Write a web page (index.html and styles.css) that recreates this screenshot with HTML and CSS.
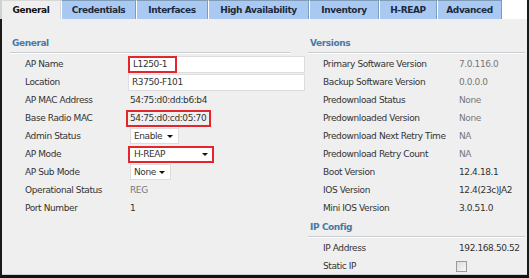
FILE: index.html
```html
<!DOCTYPE html>
<html lang="en">
<head>
    <meta charset="UTF-8">
    <title>AP Details</title>
    <link rel="stylesheet" href="styles.css">
</head>
<body>
    <div class="tabs">
        <div class="tab active" style="width:61px">General</div>
        <div class="tab" style="width:75px">Credentials</div>
        <div class="tab" style="width:72px">Interfaces</div>
        <div class="tab" style="width:101px">High Availability</div>
        <div class="tab" style="width:70px">Inventory</div>
        <div class="tab" style="width:58px">H-REAP</div>
        <div class="tab" style="width:65px">Advanced</div>
    </div>
    <div class="panel">
        <div class="col left">
            <div class="section-title">General</div>
            <div class="rows">
                <div class="row"><span class="label">AP Name</span>
                    <div class="field wide"><span class="mark">L1250-1</span></div></div>
                <div class="row"><span class="label">Location</span>
                    <div class="field wide">R3750-F101</div></div>
                <div class="row"><span class="label">AP MAC Address</span><span class="value">54:75:d0:dd:b6:b4</span></div>
                <div class="row"><span class="label">Base Radio MAC</span><span class="value mark-text">54:75:d0:cd:05:70</span></div>
                <div class="row"><span class="label">Admin Status</span>
                    <div class="select" style="width:49px">Enable<span class="arrow"></span></div></div>
                <div class="row"><span class="label">AP Mode</span>
                    <div class="select marked" style="width:86px">H-REAP<span class="arrow"></span></div></div>
                <div class="row"><span class="label">AP Sub Mode</span>
                    <div class="select" style="width:41px">None<span class="arrow"></span></div></div>
                <div class="row"><span class="label">Operational Status</span><span class="value dim">REG</span></div>
                <div class="row"><span class="label">Port Number</span><span class="value">1</span></div>
            </div>
        </div>
        <div class="col right">
            <div class="section-title">Versions</div>
            <div class="rows">
                <div class="row"><span class="label">Primary Software Version</span><span class="value dim">7.0.116.0</span></div>
                <div class="row"><span class="label">Backup Software Version</span><span class="value dim">0.0.0.0</span></div>
                <div class="row"><span class="label">Predownload Status</span><span class="value dim">None</span></div>
                <div class="row"><span class="label">Predownloaded Version</span><span class="value dim">None</span></div>
                <div class="row"><span class="label">Predownload Next Retry Time</span><span class="value dim">NA</span></div>
                <div class="row"><span class="label">Predownload Retry Count</span><span class="value dim">NA</span></div>
                <div class="row"><span class="label">Boot Version</span><span class="value">12.4.18.1</span></div>
                <div class="row"><span class="label">IOS Version</span><span class="value">12.4(23c)JA2</span></div>
                <div class="row"><span class="label">Mini IOS Version</span><span class="value">3.0.51.0</span></div>
            </div>
            <div class="section-title sub">IP Config</div>
            <div class="rows">
                <div class="row"><span class="label">IP Address</span><span class="value">192.168.50.52</span></div>
                <div class="row"><span class="label">Static IP</span><span class="checkbox"></span></div>
            </div>
        </div>
    </div>
</body>
</html>
```

FILE: styles.css
```css
:root {
    --tab-blue: #a9c9f2;
    --tab-border: #7f9db9;
    --panel-bg: #efefef;
    --title-blue: #4b78a5;
    --mark-red: #e3262e;
}
body, html {
    margin: 0;
    background: #ffffff;
    font-family: 'DejaVu Sans', Verdana, sans-serif;
    font-size: 9px;
    letter-spacing: -0.4px;
    color: #333333;
}
body {
    width: 529px;
    height: 278px;
    overflow: hidden;
}
.tabs {
    display: flex;
    height: 19px;
    background: #ffffff;
    border-right: 2px solid #1a1a1a;
}
.tab {
    box-sizing: border-box;
    height: 19px;
    line-height: 18px;
    text-align: center;
    font-weight: bold;
    color: #1c2a3c;
    background: var(--tab-blue);
    border: 1px solid var(--tab-border);
    border-left-color: #ffffff;
    border-bottom: none;
    white-space: nowrap;
    flex: none;
}
.tab.active {
    background: var(--panel-bg);
    color: #111111;
    border-color: #d8d8d8;
    border-left: 2px solid #d0d0d0;
}
.panel {
    display: flex;
    height: 256px;
    background: var(--panel-bg);
    border-left: 2px solid #1a1a1a;
    border-right: 2px solid #1a1a1a;
    border-bottom: 3px solid #111111;
    box-shadow: inset 0 -1px 0 #cfcfcf;
}
.col.left {
    width: 280px;
    margin-left: 8px;
}
.col.right {
    width: 217px;
    margin-left: 18px;
}
.section-title {
    margin-top: 19px;
    height: 14px;
    padding-left: 2px;
    font-weight: bold;
    color: var(--title-blue);
    border-bottom: 1px solid #c9cdd2;
    box-shadow: 0 1px 0 #ffffff;
}
.section-title.sub {
    margin-top: 5px;
}
.rows {
    padding-top: 2px;
}
.row {
    display: flex;
    align-items: center;
    height: 18px;
    white-space: nowrap;
}
.row > * {
    flex: none;
}
.left .label {
    width: 105px;
    padding-left: 15px;
}
.right .label {
    width: 136px;
    padding-left: 15px;
}
.value {
    color: #333333;
}
.value.dim {
    color: #777777;
}
.field {
    box-sizing: border-box;
    height: 17px;
    line-height: 15px;
    background: #ffffff;
    border: 1px solid #dddddd;
    padding-left: 3px;
    margin-left: -2px;
}
.field.wide {
    width: 177px;
}
.mark {
    display: inline-block;
    box-sizing: border-box;
    height: 17px;
    line-height: 13px;
    margin: -1px 0 0 -4px;
    padding: 0 4px 0 3px;
    width: 49px;
    border: 2px solid var(--mark-red);
}
.mark-text {
    box-sizing: border-box;
    height: 17px;
    line-height: 13px;
    margin-left: -4px;
    padding: 0 3px 0 2px;
    border: 2px solid var(--mark-red);
}
.select {
    box-sizing: border-box;
    position: relative;
    height: 16px;
    line-height: 14px;
    background: #ffffff;
    border: 1px solid #dddddd;
    padding-left: 3px;
}
.select.marked {
    height: 17px;
    line-height: 13px;
    margin-left: -2px;
    padding-left: 4px;
    border: 2px solid var(--mark-red);
}
.arrow {
    position: absolute;
    right: 5px;
    top: 6px;
    border-left: 3px solid transparent;
    border-right: 3px solid transparent;
    border-top: 3px solid #111111;
}
.select.marked .arrow {
    top: 5px;
    right: 4px;
}
.checkbox {
    box-sizing: border-box;
    width: 11px;
    height: 11px;
    margin-left: -3px;
    border: 1px solid #9a9a9a;
    background: linear-gradient(135deg, #dcdcdc, #f8f8f8);
}
```
